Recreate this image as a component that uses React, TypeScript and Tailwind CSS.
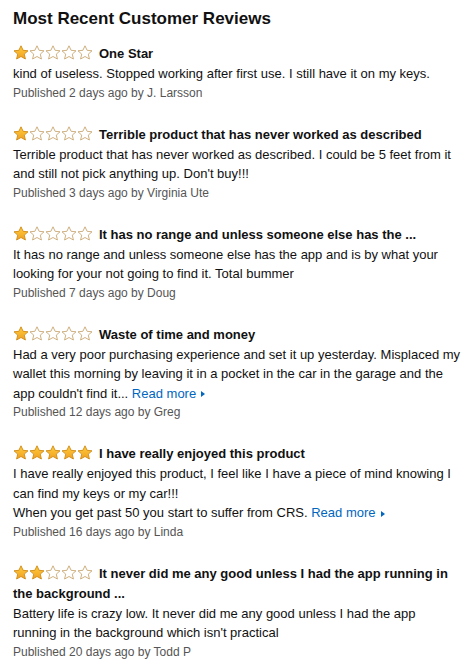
import { Fragment } from 'react'

type Review = {
  stars: number
  title: string
  body: string[]
  more?: boolean
  published: string
}

const reviews: Review[] = [
  {
    stars: 1,
    title: 'One Star',
    body: ['kind of useless. Stopped working after first use. I still have it on my keys.'],
    published: 'Published 2 days ago by J. Larsson',
  },
  {
    stars: 1,
    title: 'Terrible product that has never worked as described',
    body: [
      "Terrible product that has never worked as described. I could be 5 feet from it and still not pick anything up. Don't buy!!!",
    ],
    published: 'Published 3 days ago by Virginia Ute',
  },
  {
    stars: 1,
    title: 'It has no range and unless someone else has the ...',
    body: [
      'It has no range and unless someone else has the app and is by what your looking for your not going to find it. Total bummer',
    ],
    published: 'Published 7 days ago by Doug',
  },
  {
    stars: 1,
    title: 'Waste of time and money',
    body: [
      "Had a very poor purchasing experience and set it up yesterday. Misplaced my wallet this morning by leaving it in a pocket in the car in the garage and the app couldn't find it...",
    ],
    more: true,
    published: 'Published 12 days ago by Greg',
  },
  {
    stars: 5,
    title: 'I have really enjoyed this product',
    body: [
      'I have really enjoyed this product, I feel like I have a piece of mind knowing I can find my keys or my car!!!',
      'When you get past 50 you start to suffer from CRS.',
    ],
    more: true,
    published: 'Published 16 days ago by Linda',
  },
  {
    stars: 2,
    title: 'It never did me any good unless I had the app running in the background ...',
    body: [
      "Battery life is crazy low. It never did me any good unless I had the app running in the background which isn't practical",
    ],
    published: 'Published 20 days ago by Todd P',
  },
]

function Star({ filled }: { filled: boolean }) {
  return (
    <svg width="16" height="15" viewBox="0 0 16 15" className="shrink-0">
      <defs>
        <linearGradient id="gold" x1="0" y1="0" x2="0" y2="1">
          <stop offset="0" stopColor="#ffce3d" />
          <stop offset="1" stopColor="#f0a020" />
        </linearGradient>
      </defs>
      <path
        d="M8 0.8 L10.1 5.3 L15 5.8 L11.3 9.1 L12.4 14 L8 11.5 L3.6 14 L4.7 9.1 L1 5.8 L5.9 5.3 Z"
        fill={filled ? 'url(#gold)' : '#fff'}
        stroke={filled ? '#d08a14' : '#c9a772'}
        strokeWidth="0.9"
        strokeLinejoin="round"
      />
    </svg>
  )
}

function Stars({ count }: { count: number }) {
  return (
    <span className="mr-[6px] inline-flex translate-y-[2px] align-baseline">
      {[0, 1, 2, 3, 4].map((i) => (
        <Star key={i} filled={i < count} />
      ))}
    </span>
  )
}

// small right-pointing caret after "Read more"
function Caret() {
  return (
    <svg width="4" height="6" viewBox="0 0 4 6" className="ml-[5px] inline-block align-middle">
      <path d="M0 0 L4 3 L0 6 Z" fill="#0066c0" />
    </svg>
  )
}

function App() {
  return (
    <div
      className="min-h-[666px] bg-white pl-[13px] pr-[12px] pt-[8px] text-[#111]"
      style={{ fontFamily: '"Liberation Sans", Arial, sans-serif' }}
    >
      <h2 className="mb-[13px] text-[17px] font-bold leading-[22px]">Most Recent Customer Reviews</h2>
      {reviews.map((r, idx) => (
        <div key={idx} className="mb-[21px]">
          <div className="text-[13px] font-bold leading-[20px]">
            <Stars count={r.stars} />
            {r.title}
          </div>
          <div className="text-[13px] leading-[19.5px]">
            {r.body.map((b, i) => (
              <Fragment key={i}>
                {i > 0 && <br />}
                {b}
                {r.more && i === r.body.length - 1 && (
                  <>
                    {' '}
                    <a href="#" className="whitespace-nowrap text-[#0066c0]">
                      Read more
                      <Caret />
                    </a>
                  </>
                )}
              </Fragment>
            ))}
          </div>
          <div className="text-[12px] leading-[19px] text-[#555]">{r.published}</div>
        </div>
      ))}
    </div>
  )
}

export default App
